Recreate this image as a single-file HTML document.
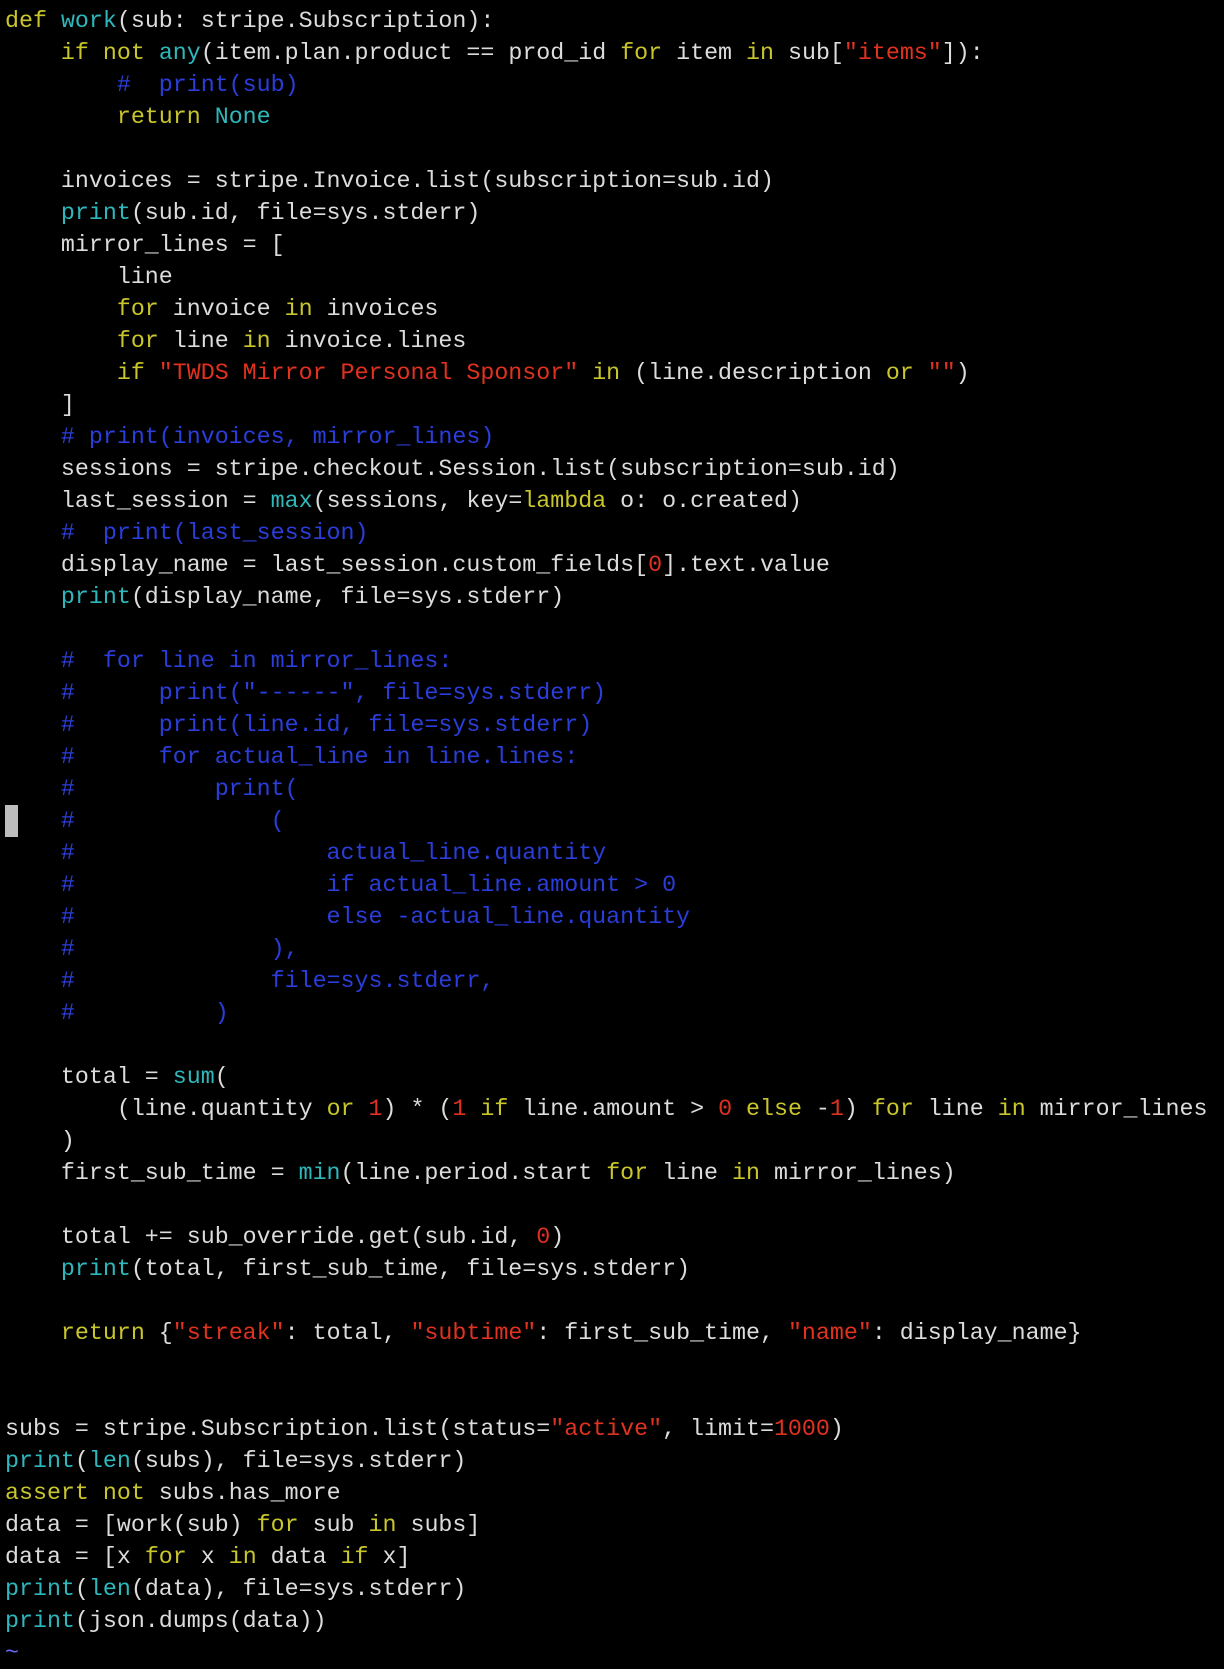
<!DOCTYPE html>
<html><head><meta charset="utf-8"><style>
html,body{margin:0;padding:0;background:#000;width:1224px;height:1658px;overflow:hidden}
pre{margin:0;position:absolute;left:5px;top:5px;font-family:"Liberation Mono","DejaVu Sans Mono",monospace;font-size:23.3px;line-height:32px;color:#dcdcdc;white-space:pre}
.y{color:#c9c62c}.c{color:#2fb8bb}.r{color:#e0321f}.b{color:#2b3edb}.t{color:#6a6af5}
.cur{position:absolute;left:5px;top:805px;width:13px;height:32px;background:#bdbdbd}
</style></head><body>
<div class="cur"></div>
<pre><span class="y">def</span> <span class="c">work</span>(sub: stripe.Subscription):
    <span class="y">if</span> <span class="y">not</span> <span class="c">any</span>(item.plan.product == prod_id <span class="y">for</span> item <span class="y">in</span> sub[<span class="r">"items"</span>]):
        <span class="b">#  print(sub)</span>
        <span class="y">return</span> <span class="c">None</span>

    invoices = stripe.Invoice.list(subscription=sub.id)
    <span class="c">print</span>(sub.id, file=sys.stderr)
    mirror_lines = [
        line
        <span class="y">for</span> invoice <span class="y">in</span> invoices
        <span class="y">for</span> line <span class="y">in</span> invoice.lines
        <span class="y">if</span> <span class="r">"TWDS Mirror Personal Sponsor"</span> <span class="y">in</span> (line.description <span class="y">or</span> <span class="r">""</span>)
    ]
    <span class="b"># print(invoices, mirror_lines)</span>
    sessions = stripe.checkout.Session.list(subscription=sub.id)
    last_session = <span class="c">max</span>(sessions, key=<span class="y">lambda</span> o: o.created)
    <span class="b">#  print(last_session)</span>
    display_name = last_session.custom_fields[<span class="r">0</span>].text.value
    <span class="c">print</span>(display_name, file=sys.stderr)

<span class="b">    #  for line in mirror_lines:
    #      print("------", file=sys.stderr)
    #      print(line.id, file=sys.stderr)
    #      for actual_line in line.lines:
    #          print(
    #              (
    #                  actual_line.quantity
    #                  if actual_line.amount &gt; 0
    #                  else -actual_line.quantity
    #              ),
    #              file=sys.stderr,
    #          )</span>

    total = <span class="c">sum</span>(
        (line.quantity <span class="y">or</span> <span class="r">1</span>) * (<span class="r">1</span> <span class="y">if</span> line.amount &gt; <span class="r">0</span> <span class="y">else</span> -<span class="r">1</span>) <span class="y">for</span> line <span class="y">in</span> mirror_lines
    )
    first_sub_time = <span class="c">min</span>(line.period.start <span class="y">for</span> line <span class="y">in</span> mirror_lines)

    total += sub_override.get(sub.id, <span class="r">0</span>)
    <span class="c">print</span>(total, first_sub_time, file=sys.stderr)

    <span class="y">return</span> {<span class="r">"streak"</span>: total, <span class="r">"subtime"</span>: first_sub_time, <span class="r">"name"</span>: display_name}


subs = stripe.Subscription.list(status=<span class="r">"active"</span>, limit=<span class="r">1000</span>)
<span class="c">print</span>(<span class="c">len</span>(subs), file=sys.stderr)
<span class="y">assert</span> <span class="y">not</span> subs.has_more
data = [work(sub) <span class="y">for</span> sub <span class="y">in</span> subs]
data = [x <span class="y">for</span> x <span class="y">in</span> data <span class="y">if</span> x]
<span class="c">print</span>(<span class="c">len</span>(data), file=sys.stderr)
<span class="c">print</span>(json.dumps(data))
<span class="t">~</span></pre>
</body></html>
